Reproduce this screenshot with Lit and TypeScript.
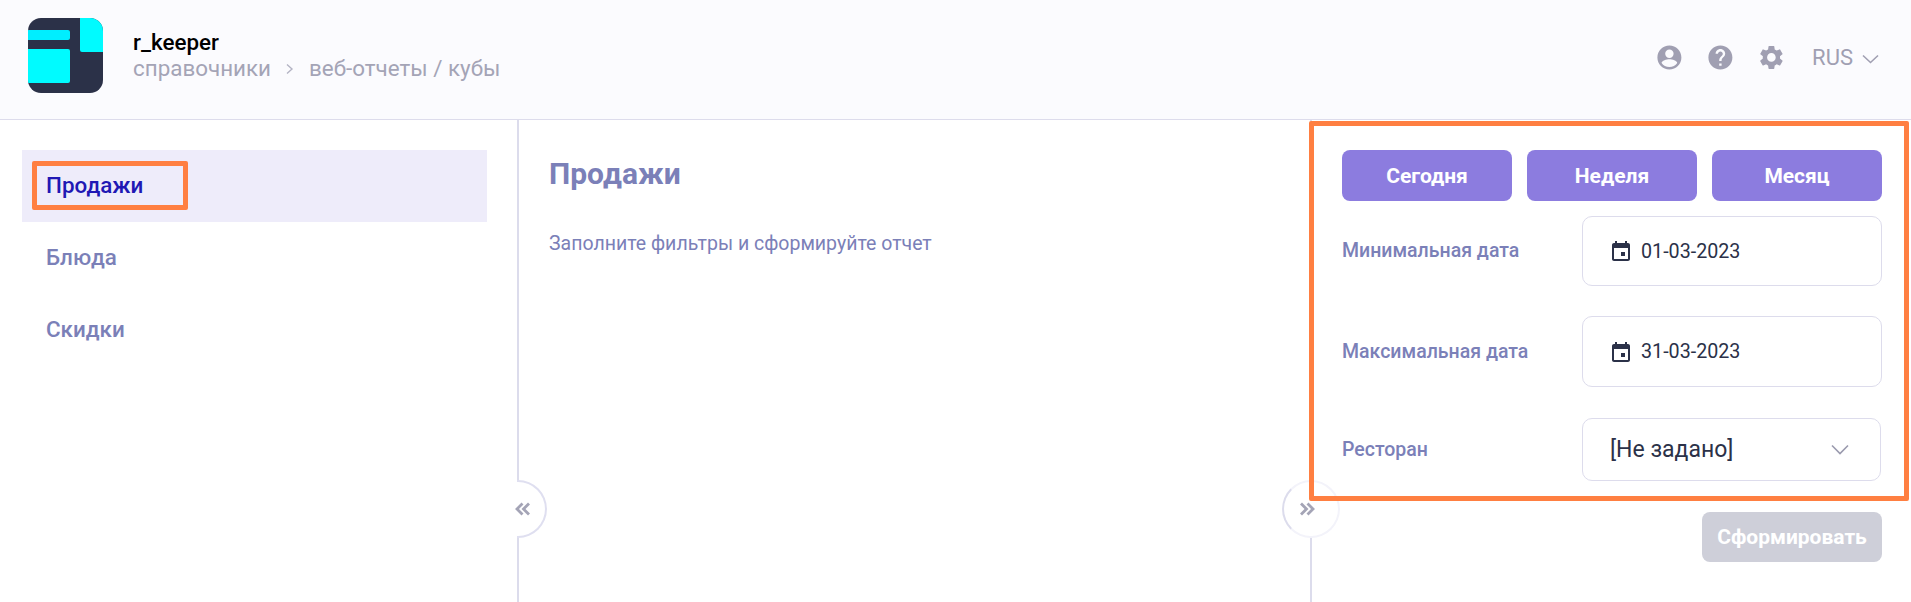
import { LitElement, html, css, svg } from "lit";
import { customElement } from "lit/decorators.js";

const calendar = svg`<path d="M19 4h-1V2h-2v2H8V2H6v2H5C3.9 4 3 4.9 3 6v14c0 1.1.9 2 2 2h14c1.1 0 2-.9 2-2V6c0-1.1-.9-2-2-2zm0 16H5V9h14v11zM12 13v4h4v-4h-4z" fill="#2b3148"/>`;

@customElement("app-root")
export class AppRoot extends LitElement {
  static styles = css`
    :host { display: block; position: relative; height: 602px; overflow: hidden; background: #fff; font-family: Roboto, "Noto Sans", sans-serif; }
    * { box-sizing: border-box; }
    header { height: 120px; background: #fbfbfe; border-bottom: 1px solid #dddcec; display: flex; align-items: flex-start; padding: 18px 0 0 28px; }
    .logo { width: 75px; height: 75px; display: block; flex: none; }
    .brand { margin-left: 30px; padding-top: 11px; }
    .name { font-size: 22.400px; line-height: 26px; font-weight: 500; color: #000; }
    .crumbs { display: flex; align-items: center; font-size: 22.400px; line-height: 26px; color: #a4a4b6; }
    .crumbs svg { width: 10px; height: 12px; margin: 2px 14px 0 14px; }
    .tools { margin-left: auto; display: flex; align-items: center; padding: 25px 32px 0 0; color: #a09fb2; }
    .tools .ic { width: 28.800px; height: 28.800px; margin-right: 22.200px; display: block; fill: #a09fb2; }
    .tools .lang { font-size: 22px; margin-left: 4px; }
    .tools .chev { width: 17px; height: 10px; margin-left: 9px; margin-top: 3px; }
    main { display: grid; grid-template-columns: 519px 1fr 601px; height: 482px; }
    .side { border-right: 2px solid #dcdcec; padding: 30px 30px 0 22px; }
    .item { height: 72px; display: flex; align-items: center; padding: 0 0 2px 24px; font-size: 22.400px; font-weight: 500; color: #7b80b8; }
    .item.on { background: #eeecfa; color: #2018b4; }
    .center { padding: 36px 30px 0 30px; }
    h1 { margin: 0; font-size: 30px; line-height: 36px; font-weight: 700; color: #7b80b8; }
    .hint { margin: 40px 0 0; font-size: 19.500px; line-height: 24px; color: #7b80b8; }
    .panel { border-left: 2px solid #dcdcec; padding: 30px 29px 0 30px; }
    .quick { display: grid; grid-template-columns: repeat(3, 170px); column-gap: 15px; }
    .btn { height: 51px; border: 0; border-radius: 8px; background: #8c7cdf; color: #fff; font: 700 21px Roboto, sans-serif; display: flex; align-items: center; justify-content: center; }
    .row { display: flex; align-items: center; justify-content: space-between; }
    .label { font-size: 19.500px; font-weight: 500; color: #7b80b8; padding-bottom: 1px; }
    .d1 { margin-top: 15px; }
    .d2 { margin-top: 30px; }
    .field { width: 300px; height: 70px; border: 1px solid #dddcec; border-radius: 10px; display: flex; align-items: center; padding-left: 26px; font-size: 19.700px; color: #2b3148; }
    .field svg { width: 24px; height: 24px; margin-right: 8px; display: block; }
    .d2 .field { height: 71px; }
    .r { margin-top: 31px; }
    .select { width: 299px; height: 63px; margin-right: 1px; border: 1px solid #dddcec; border-radius: 10px; display: flex; align-items: center; justify-content: space-between; padding: 0 31px 0 27px; font-size: 23px; color: #2b3148; }
    .select svg { width: 18px; height: 11px; }
    .send { margin: 31px 0 0 auto; width: 180px; height: 50px; border-radius: 8px; background: #cecfd9; color: #fff; font: 700 21px Roboto, sans-serif; display: flex; align-items: center; justify-content: center; }
    .toggle { position: absolute; height: 58px; top: 480px; background: #fff; display: flex; align-items: center; }
    .toggle svg { width: 16px; height: 14px; display: block; overflow: visible; }
    .t1 { left: 517px; width: 30px; border: 2px solid #dfdff0; border-left: 0; border-radius: 0 29px 29px 0; }
    .t1 svg { margin-left: -2px; }
    .t2 { left: 1282px; width: 58px; border-radius: 50%; justify-content: center; border: 2px solid #f3f3fa; border-left-color: #dcdcec; padding-right: 9px; }
    .mark { position: absolute; border: 5px solid #ff7f41; border-radius: 2px; pointer-events: none; }
    .m1 { left: 32px; top: 161px; width: 156px; height: 49px; }
    .m2 { left: 1309px; top: 121px; width: 600px; height: 380px; }
  `;

  render() {
    return html`
      <header>
        <svg class="logo" viewBox="0 0 75 75">
          <defs><clipPath id="lc"><rect width="75" height="75" rx="13"/></clipPath></defs>
          <g clip-path="url(#lc)">
            <rect width="75" height="75" fill="#2b3148"/>
            <rect x="52" y="-2" width="25" height="36" rx="2" fill="#00fbff"/>
            <rect x="-4" y="12" width="46" height="10" rx="2" fill="#00eeff"/>
            <rect x="-4" y="31" width="46" height="34" rx="2" fill="#00fbff"/>
          </g>
        </svg>
        <div class="brand">
          <div class="name">r_keeper</div>
          <div class="crumbs">
            <span>справочники</span>
            <svg viewBox="0 0 10 12"><path d="M2 1.500 7 6 2 10.500" fill="none" stroke="#b4b4c4" stroke-width="1.400"/></svg>
            <span>веб-отчеты / кубы</span>
          </div>
        </div>
        <div class="tools">
          <svg class="ic" viewBox="0 0 24 24"><path d="M12 2C6.480 2 2 6.480 2 12s4.480 10 10 10 10-4.480 10-10S17.520 2 12 2zm0 3.500a3.500 3.500 0 1 1 0 7 3.500 3.500 0 0 1 0-7zM12 20c-2.700 0-5.100-1.300-6.500-3.400C5.600 14.600 9.700 13.500 12 13.500s6.400 1.100 6.500 3.100C17.100 18.700 14.700 20 12 20z"/></svg>
          <svg class="ic" viewBox="0 0 24 24"><path d="M12 2C6.480 2 2 6.480 2 12s4.480 10 10 10 10-4.480 10-10S17.520 2 12 2zm1 17h-2v-2h2v2zm2.070-7.750-.9.920C13.450 12.900 13 13.500 13 15h-2v-.5c0-1.100.45-2.100 1.170-2.830l1.240-1.260c.37-.36.590-.86.590-1.410 0-1.100-.9-2-2-2s-2 .9-2 2H8c0-2.210 1.790-4 4-4s4 1.790 4 4c0 .88-.36 1.680-.93 2.250z"/></svg>
          <svg class="ic" viewBox="0 0 24 24"><path d="M19.140 12.940c.04-.3.060-.61.060-.94 0-.32-.02-.64-.07-.94l2.030-1.580c.18-.14.230-.41.120-.61l-1.920-3.320c-.12-.22-.37-.29-.59-.22l-2.390.96c-.5-.38-1.030-.7-1.620-.94l-.36-2.540c-.04-.24-.24-.41-.48-.41h-3.840c-.24 0-.43.170-.47.410l-.36 2.540c-.59.24-1.130.57-1.620.94l-2.390-.96c-.22-.08-.47 0-.59.220L2.740 8.870c-.12.210-.08.470.12.610l2.030 1.580c-.05.3-.09.630-.09.940s.02.640.07.940l-2.030 1.580c-.18.140-.23.410-.12.610l1.920 3.320c.12.220.37.290.59.220l2.390-.96c.5.380 1.030.7 1.620.94l.36 2.540c.05.240.24.410.48.410h3.840c.24 0 .44-.17.470-.41l.36-2.540c.59-.24 1.130-.56 1.620-.94l2.390.96c.22.080.47 0 .59-.22l1.920-3.320c.12-.22.070-.47-.12-.61l-2.010-1.580zM12 15.600c-1.980 0-3.600-1.620-3.600-3.600s1.620-3.600 3.600-3.600 3.600 1.620 3.600 3.600-1.620 3.600-3.600 3.600z"/></svg>
          <span class="lang">RUS</span>
          <svg class="chev" viewBox="0 0 17 10"><path d="M1 1.500 8.500 8.500 16 1.500" fill="none" stroke="#a09fb2" stroke-width="1.600"/></svg>
        </div>
      </header>
      <main>
        <nav class="side">
          <div class="item on">Продажи</div>
          <div class="item">Блюда</div>
          <div class="item">Скидки</div>
        </nav>
        <section class="center">
          <h1>Продажи</h1>
          <p class="hint">Заполните фильтры и сформируйте отчет</p>
        </section>
        <aside class="panel">
          <div class="quick">
            <div class="btn">Сегодня</div>
            <div class="btn">Неделя</div>
            <div class="btn">Месяц</div>
          </div>
          <div class="row d1">
            <span class="label">Минимальная дата</span>
            <div class="field"><svg viewBox="0 0 24 24">${calendar}</svg>01-03-2023</div>
          </div>
          <div class="row d2">
            <span class="label">Максимальная дата</span>
            <div class="field"><svg viewBox="0 0 24 24">${calendar}</svg>31-03-2023</div>
          </div>
          <div class="row r">
            <span class="label">Ресторан</span>
            <div class="select"><span>[Не задано]</span><svg viewBox="0 0 18 11"><path d="M1 1.500 9 9.500 17 1.500" fill="none" stroke="#9a9aae" stroke-width="1.600"/></svg></div>
          </div>
          <div class="send">Сформировать</div>
        </aside>
      </main>
      <div class="toggle t1"><svg viewBox="0 0 16 14"><path d="M7.500 1.500 2 7l5.500 5.500M14 1.500 8.500 7l5.500 5.500" fill="none" stroke="#a4a4b6" stroke-width="2.800"/></svg></div>
      <div class="toggle t2"><svg viewBox="0 0 16 14"><path d="M2 1.500 7.500 7 2 12.500M8.500 1.500 14 7l-5.500 5.500" fill="none" stroke="#a4a4b6" stroke-width="2.800"/></svg></div>
      <div class="mark m1"></div>
      <div class="mark m2"></div>
    `;
  }
}
